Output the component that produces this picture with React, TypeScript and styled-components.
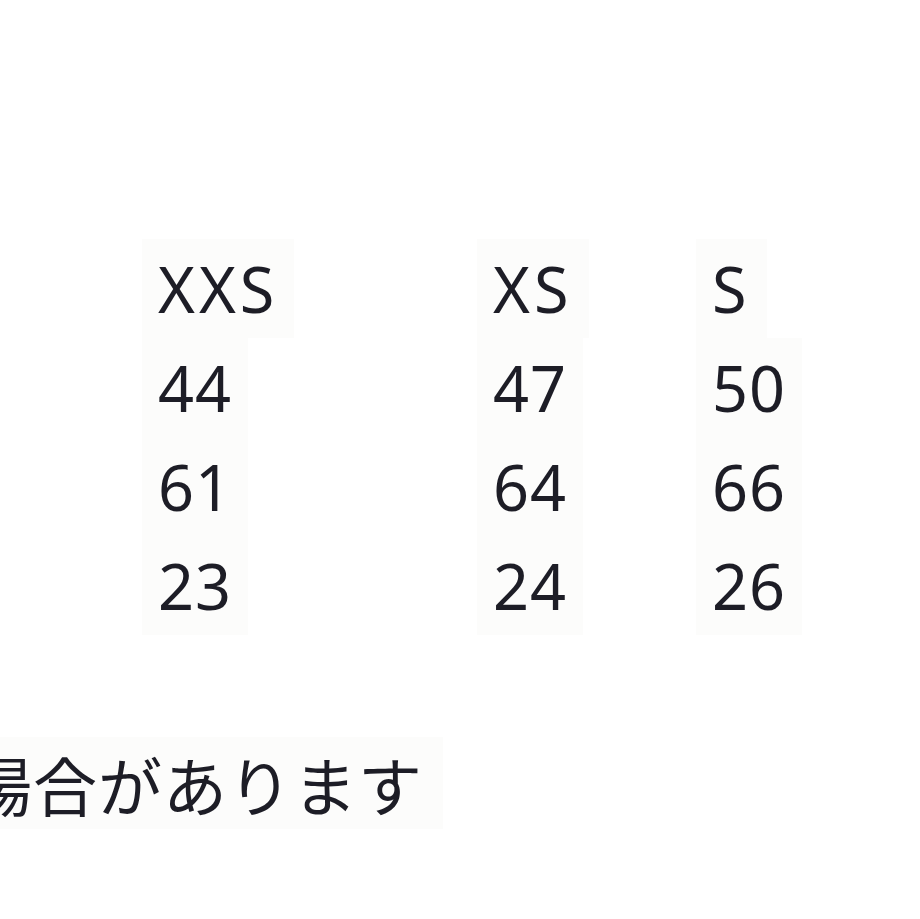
import React from "react";
import styled, { createGlobalStyle } from "styled-components";

const GlobalStyle = createGlobalStyle`
  html, body {
    margin: 0;
    padding: 0;
    background: #ffffff;
    overflow: hidden;
  }
  body {
    font-family: "Noto Sans", "Noto Sans CJK JP", sans-serif;
    color: #1d1d26;
  }
`;

const Page = styled.div`
  width: 920px;
  height: 919px;
  overflow: hidden;
  padding-top: 239px;
  box-sizing: border-box;
`;

const SizeTable = styled.div`
  display: grid;
  grid-template-columns: 335px 219px 219px 219px;
  margin-left: 142px;
`;

const Cell = styled.div<{ $head?: boolean }>`
  height: 99px;
  line-height: 99px;
  font-size: 63px;
  white-space: nowrap;
  letter-spacing: ${(props) => (props.$head ? "4px" : "1px")};
`;

const CellText = styled.span`
  display: inline-block;
  padding: 0 16px;
  background: #fcfcfb;
`;

const Note = styled.p`
  margin: 116px 0 0 -32px;
  font-family: "Noto Sans CJK JP", sans-serif;
  font-size: 64px;
  line-height: 64px;
  letter-spacing: 1px;
  white-space: nowrap;
`;

const NoteText = styled.span`
  background: #fcfcfb;
  padding-right: 20px;
`;

const rows: string[][] = [
  ["XXS", "XS", "S", ""],
  ["44", "47", "50", ""],
  ["61", "64", "66", ""],
  ["23", "24", "26", ""],
];

export default function App() {
  return (
    <>
      <GlobalStyle />
      <Page>
        <SizeTable>
          {rows.map((row, r) =>
            row.map((value, c) => (
              <Cell key={`${r}-${c}`} $head={r === 0}>
                {value && <CellText>{value}</CellText>}
              </Cell>
            ))
          )}
        </SizeTable>
        <Note>
          <NoteText>場合があります</NoteText>
        </Note>
      </Page>
    </>
  );
}
